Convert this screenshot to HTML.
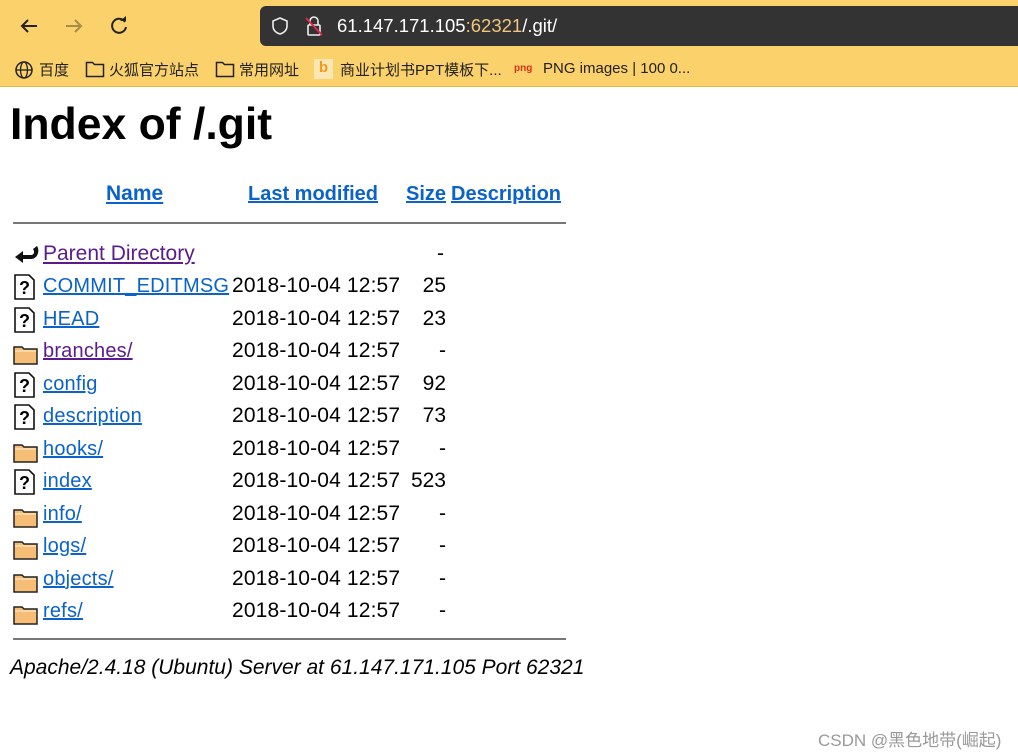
<!DOCTYPE html>
<html><head><meta charset="utf-8"><style>
*{margin:0;padding:0;box-sizing:border-box}
body{width:1018px;height:756px;position:relative;background:#fff;font-family:"Liberation Sans","Noto Sans CJK SC",sans-serif;overflow:hidden}
.top{position:absolute;left:0;top:0;width:1018px;height:87px;background:#fbd16b;border-bottom:1px solid #e8b84e}
.addr{position:absolute;left:260px;top:6px;width:758px;height:40px;background:#333;border-radius:6px 0 0 6px;color:#fff;font-size:18.5px}
.bm{position:absolute;top:59px;font-size:15px;color:#222;white-space:nowrap}
.t{position:absolute;font-size:21px;white-space:nowrap;line-height:24px}
a{color:#0b63c9;text-decoration:underline}
a.v{color:#5b1b8a}
.ic{position:absolute;left:13px}
</style></head><body>
<div class="top">
<svg style="position:absolute;left:18px;top:15px" width="22" height="22" viewBox="0 0 22 22"><path d="M19 11H4M10 5l-6 6 6 6" stroke="#222" stroke-width="2" fill="none"/></svg>
<svg style="position:absolute;left:63px;top:15px" width="22" height="22" viewBox="0 0 22 22"><path d="M3 11h15M12 5l6 6-6 6" stroke="#a88a4a" stroke-width="2" fill="none"/></svg>
<svg style="position:absolute;left:108px;top:15px" width="22" height="22" viewBox="0 0 22 22"><path d="M17 7A7 7 0 1 0 18 12" stroke="#222" stroke-width="2" fill="none"/><path d="M12 6h6V1z" fill="#222"/></svg>
<div class="addr">
<svg style="position:absolute;left:10px;top:10px" width="20" height="20" viewBox="0 0 20 20"><path d="M10 2l7 3v5c0 4-3 7-7 8-4-1-7-4-7-8V5z" stroke="#eee" stroke-width="1.6" fill="none"/></svg>
<svg style="position:absolute;left:44px;top:9px" width="20" height="22" viewBox="0 0 20 22"><rect x="4" y="10" width="12" height="10" rx="1" stroke="#eee" stroke-width="1.6" fill="none"/><path d="M6 10V6a4 4 0 0 1 8 0v4" stroke="#eee" stroke-width="1.6" fill="none"/><path d="M2 3l16 17" stroke="#e2254b" stroke-width="2"/></svg>
<span style="position:absolute;left:77px;top:9px">61.147.171.105<span style="color:#f2c67a">:62321</span>/.git/</span>
</div>
<svg style="position:absolute;left:14px;top:60px" width="20" height="20" viewBox="0 0 20 20"><circle cx="10" cy="10" r="8" stroke="#222" stroke-width="1.5" fill="none"/><ellipse cx="10" cy="10" rx="3.5" ry="8" stroke="#222" stroke-width="1.3" fill="none"/><path d="M2 10h16" stroke="#222" stroke-width="1.3"/></svg>
<span class="bm" style="left:39px">百度</span>
<svg style="position:absolute;left:85px;top:60px" width="20" height="18" viewBox="0 0 20 18"><path d="M1.5 2.5h6l2 2h9v12h-17z" stroke="#222" stroke-width="1.5" fill="none"/></svg>
<span class="bm" style="left:109px">火狐官方站点</span>
<svg style="position:absolute;left:215px;top:60px" width="20" height="18" viewBox="0 0 20 18"><path d="M1.5 2.5h6l2 2h9v12h-17z" stroke="#222" stroke-width="1.5" fill="none"/></svg>
<span class="bm" style="left:239px">常用网址</span>
<div style="position:absolute;left:314px;top:59px;width:19px;height:20px;background:#fbe7b3;color:#f29a1c;font-weight:bold;font-size:15px;text-align:center">b</div>
<span class="bm" style="left:340px">商业计划书PPT模板下...</span>
<span class="bm" style="left:514px;top:63px;font-size:10px;color:#d9311b;font-weight:bold">png</span>
<span class="bm" style="left:543px;top:60px">PNG images | 100 0...</span>
</div>

<div class="t" style="left:10px;top:101px;font-size:44.5px;line-height:48px;font-weight:bold">Index of /.git</div>
<div class="t" style="left:106px;top:182px;font-weight:bold"><a href="#">Name</a></div>
<div class="t" style="left:248px;top:182px;font-weight:bold;font-size:20px"><a href="#">Last modified</a></div>
<div class="t" style="left:406px;top:182px;font-weight:bold;font-size:20px"><a href="#">Size</a></div>
<div class="t" style="left:451px;top:182px;font-weight:bold;font-size:20px"><a href="#">Description</a></div>
<div style="position:absolute;left:13px;top:222px;width:553px;height:2px;background:#777"></div>
<div style="position:absolute;left:13px;top:638px;width:553px;height:2px;background:#777"></div>

<svg class="ic" style="top:242px" width="26" height="24" viewBox="0 0 26 24"><path d="M2 15l8-6v4h8c3 0 4-3 2-6l4-3c3 4 1 13-6 13h-8v4z" fill="#111"/></svg>
<div class="t" style="left:43px;top:242px"><a class="v" href="#">Parent Directory</a></div>
<div class="t" style="left:437px;top:242px">-</div>

<div id="rows"></div>
<div class="t" style="left:10px;top:656px;font-style:italic;font-size:21px">Apache/2.4.18 (Ubuntu) Server at 61.147.171.105 Port 62321</div>
<div style="position:absolute;left:818px;top:726px;font-size:17px;color:#999">CSDN @黑色地带(崛起)</div>
<script>
var r=[["COMMIT_EDITMSG","25",0],["HEAD","23",0],["branches/","-",1,1],["config","92",0],["description","73",0],["hooks/","-",1],["index","523",0],["info/","-",1],["logs/","-",1],["objects/","-",1],["refs/","-",1]];
var h="";
r.forEach(function(x,i){var y=274+i*32.5;
var ic=x[2]?'<svg class="ic" style="top:'+(y+4)+'px" width="26" height="22" viewBox="0 0 26 22"><path d="M1 4h8l2 2h13v15H1z" fill="#f6bd77" stroke="#222" stroke-width="1.5"/><path d="M2 8h21" stroke="#fde0b0" stroke-width="1.5"/></svg>':
'<svg class="ic" style="top:'+(y)+'px" width="24" height="26" viewBox="0 0 24 26"><path d="M2 1h14l5 5v19H2z" fill="#fff" stroke="#111" stroke-width="1.6"/><text x="11.5" y="20" font-size="18" font-weight="bold" text-anchor="middle" font-family="Liberation Sans" fill="#000">?</text></svg>';
h+=ic+'<div class="t" style="left:43px;top:'+y+'px;font-size:20px;letter-spacing:0.2px"><a class="'+(x[3]?'v':'')+'" href="#">'+x[0]+'</a></div><div class="t" style="left:232px;top:'+y+'px;letter-spacing:0.15px">2018-10-04 12:57</div><div class="t" style="right:'+(1018-446)+'px;top:'+y+'px">'+x[1]+'</div>';});
document.getElementById("rows").outerHTML=h;
</script>
</body></html>
